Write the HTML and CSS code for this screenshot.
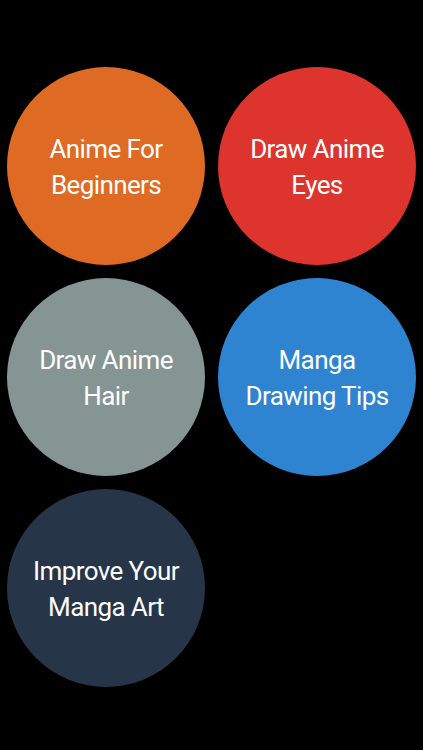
FILE: index.html
```html
<!DOCTYPE html>
<html lang="en">
<head>
    <meta charset="UTF-8">
    <meta name="viewport" content="width=device-width, initial-scale=1.0">
    <title>Anime Drawing</title>
    <link rel="stylesheet" href="styles.css">
</head>
<body>
    <div class="menu">
        <a href="#" class="circle orange">Anime For<br>Beginners</a>
        <a href="#" class="circle red">Draw Anime<br>Eyes</a>
        <a href="#" class="circle grey">Draw Anime<br>Hair</a>
        <a href="#" class="circle blue">Manga<br>Drawing Tips</a>
        <a href="#" class="circle navy">Improve Your<br>Manga Art</a>
    </div>
</body>
</html>
```

FILE: styles.css
```css
body {
    margin: 0;
    background: #000;
    font-family: Roboto, "Open Sans", sans-serif;
}
.menu {
    display: grid;
    grid-template-columns: 198px 198px;
    gap: 13px;
    padding: 67px 7px 0 7px;
}
.circle {
    width: 198px;
    height: 198px;
    border-radius: 50%;
    display: flex;
    align-items: center;
    justify-content: center;
    text-align: center;
    color: #fff;
    text-decoration: none;
    font-size: 26px;
    line-height: 36px;
    letter-spacing: -0.6px;
    padding-top: 2px;
    box-sizing: border-box;
}
.orange { background: #de6a23; }
.red { background: #dd352e; }
.grey { background: #859593; }
.blue { background: #2e84d1; }
.navy { background: #263548; }
```
